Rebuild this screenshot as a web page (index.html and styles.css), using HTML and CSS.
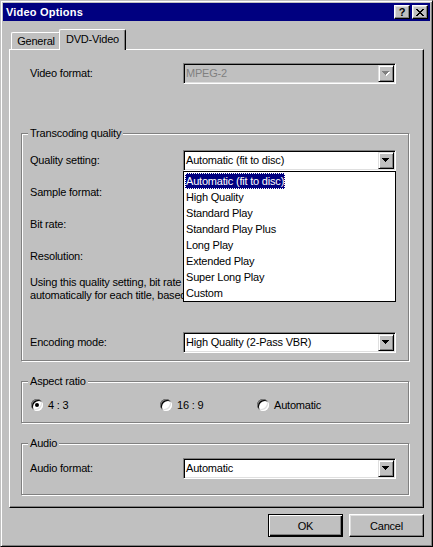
FILE: index.html
```html
<!DOCTYPE html>
<html>
<head>
<meta charset="utf-8">
<title>Video Options</title>
<link rel="stylesheet" href="styles.css">
</head>
<body>
<div class="window">
  <div class="titlebar">
    <span class="title">Video Options</span>
    <div class="title-btns">
      <span class="tbtn">?</span>
      <span class="tbtn"><svg width="8" height="7" viewBox="0 0 8 7" shape-rendering="crispEdges"><path fill="#000" d="M0 0h2v1H0z M6 0h2v1H6z M1 1h2v1H1z M5 1h2v1H5z M2 2h4v1H2z M3 3h2v1H3z M2 4h4v1H2z M1 5h2v1H1z M5 5h2v1H5z M0 6h2v1H0z M6 6h2v1H6z"/></svg></span>
    </div>
  </div>

  <div class="tabs">
    <div class="tab">General</div>
    <div class="tab active">DVD-Video</div>
  </div>

  <div class="panel">
    <div class="row video-row">
      <span class="label">Video format:</span>
      <div class="combo disabled">
        <span class="combo-value">MPEG-2</span>
        <span class="combo-btn"><svg width="8" height="5" viewBox="0 0 8 5" shape-rendering="crispEdges"><path fill="#fff" d="M1 1h7v1H1z M2 2h5v1H2z M3 3h3v1H3z M4 4h1v1H4z"/><path fill="#808080" d="M0 0h7v1H0z M1 1h5v1H1z M2 2h3v1H2z M3 3h1v1H3z"/></svg></span>
      </div>
    </div>

    <div class="group transcoding">
      <div class="group-title">Transcoding quality</div>
      <div class="row q-row">
        <span class="label">Quality setting:</span>
        <div class="combo open">
          <span class="combo-value">Automatic (fit to disc)</span>
          <span class="combo-btn"><svg width="7" height="4" viewBox="0 0 7 4" shape-rendering="crispEdges"><path fill="#000" d="M0 0h7v1H0z M1 1h5v1H1z M2 2h3v1H2z M3 3h1v1H3z"/></svg></span>
          <ul class="dropdown">
            <li><span class="selected">Automatic (fit to disc)</span></li>
            <li><span>High Quality</span></li>
            <li><span>Standard Play</span></li>
            <li><span>Standard Play Plus</span></li>
            <li><span>Long Play</span></li>
            <li><span>Extended Play</span></li>
            <li><span>Super Long Play</span></li>
            <li><span>Custom</span></li>
          </ul>
        </div>
      </div>
      <div class="row spaced"><span class="label">Sample format:</span></div>
      <div class="row spaced"><span class="label">Bit rate:</span></div>
      <div class="row spaced"><span class="label">Resolution:</span></div>
      <div class="hint">Using this quality setting, bit rate and resolution will be set<br>automatically for each title, based on its length.</div>
      <div class="row enc-row">
        <span class="label">Encoding mode:</span>
        <div class="combo">
          <span class="combo-value">High Quality (2-Pass VBR)</span>
          <span class="combo-btn"><svg width="7" height="4" viewBox="0 0 7 4" shape-rendering="crispEdges"><path fill="#000" d="M0 0h7v1H0z M1 1h5v1H1z M2 2h3v1H2z M3 3h1v1H3z"/></svg></span>
        </div>
      </div>
    </div>

    <div class="group aspect">
      <div class="group-title">Aspect ratio</div>
      <div class="radios">
        <div class="opt opt1"><span class="radio checked"></span><span>4 : 3</span></div>
        <div class="opt opt2"><span class="radio"></span><span>16 : 9</span></div>
        <div class="opt"><span class="radio"></span><span>Automatic</span></div>
      </div>
    </div>

    <div class="group audio">
      <div class="group-title">Audio</div>
      <div class="row audio-row">
        <span class="label">Audio format:</span>
        <div class="combo">
          <span class="combo-value">Automatic</span>
          <span class="combo-btn"><svg width="7" height="4" viewBox="0 0 7 4" shape-rendering="crispEdges"><path fill="#000" d="M0 0h7v1H0z M1 1h5v1H1z M2 2h3v1H2z M3 3h1v1H3z"/></svg></span>
        </div>
      </div>
    </div>
  </div>

  <div class="buttons">
    <button class="btn default">OK</button>
    <button class="btn">Cancel</button>
  </div>
</div>
</body>
</html>
```

FILE: styles.css
```css
* { box-sizing: border-box; }
html, body { margin: 0; padding: 0; }
body {
  width: 433px;
  height: 547px;
  overflow: hidden;
  background: #c0c0c0;
  font-family: "Liberation Sans", Arial, sans-serif;
  font-size: 11px;
  letter-spacing: -0.2px;
  color: #000;
}
.window {
  width: 433px;
  height: 547px;
  padding: 2px;
  background: #c0c0c0;
  border: 1px solid;
  border-color: #c0c0c0 #000 #000 #c0c0c0;
  box-shadow: inset 1px 1px 0 #fff, inset -1px -1px 0 #808080;
}
.titlebar {
  height: 18px;
  background: #000080;
  display: flex;
  align-items: center;
  padding: 0 2px 0 3px;
}
.title {
  color: #fff;
  font-weight: bold;
  letter-spacing: 0.2px;
  line-height: 13px;
  white-space: nowrap;
}
.title-btns {
  margin-left: auto;
  display: flex;
  gap: 2px;
}
.tbtn {
  width: 16px;
  height: 14px;
  flex: none;
  background: #c0c0c0;
  border: 1px solid;
  border-color: #fff #000 #000 #fff;
  box-shadow: inset -1px -1px 0 #808080, inset 1px 1px 0 #dfdfdf;
  display: flex;
  align-items: center;
  justify-content: center;
  font-weight: bold;
  line-height: 12px;
  letter-spacing: 0;
}
.tbtn svg { display: block; }
.tabs {
  margin-top: 8px;
  height: 20px;
  display: flex;
  align-items: flex-end;
  padding-left: 8px;
}
.tab {
  height: 17px;
  width: 50px;
  padding-top: 2px;
  line-height: 13px;
  text-align: center;
  background: #c0c0c0;
  border: 1px solid;
  border-bottom: none;
  border-color: #fff #000 #000 #fff;
  border-radius: 2px 2px 0 0;
  box-shadow: inset -1px 0 0 #808080;
}
.tab.active {
  height: 21px;
  width: 67px;
  padding-top: 3px;
  margin-left: -2px;
  margin-bottom: -1px;
  position: relative;
  z-index: 2;
}
.panel {
  margin: 0 6px;
  height: 459px;
  border: 1px solid;
  border-color: #fff #000 #000 #fff;
  box-shadow: inset -1px -1px 0 #808080;
  padding: 0 14px 0 11px;
}
.row {
  display: flex;
  align-items: center;
  height: 21px;
}
.label {
  width: 153px;
  flex: none;
  line-height: 13px;
  white-space: nowrap;
}
.video-row {
  margin-top: 13px;
  padding-left: 9px;
}
.combo {
  width: 213px;
  height: 21px;
  flex: none;
  display: flex;
  padding: 1px;
  background: #fff;
  border: 1px solid;
  border-color: #808080 #fff #fff #808080;
  box-shadow: inset 1px 1px 0 #000, inset -1px -1px 0 #dfdfdf;
}
.combo.open { position: relative; }
.combo.disabled { background: #c0c0c0; }
.combo-value {
  flex: 1;
  padding-left: 1px;
  line-height: 17px;
  white-space: nowrap;
  overflow: hidden;
}
.combo.disabled .combo-value { color: #808080; }
.combo-btn {
  width: 16px;
  height: 17px;
  flex: none;
  background: #c0c0c0;
  border: 1px solid;
  border-color: #dfdfdf #000 #000 #dfdfdf;
  box-shadow: inset 1px 1px 0 #fff, inset -1px -1px 0 #808080;
}
.combo-btn svg {
  display: block;
  margin: 5px 0 0 3px;
}
.dropdown {
  position: absolute;
  left: -1px;
  top: 20px;
  width: 213px;
  margin: 0;
  padding: 1px 0 0 1px;
  list-style: none;
  background: #fff;
  border: 1px solid #000;
  z-index: 5;
}
.dropdown li {
  height: 16px;
  line-height: 16px;
  white-space: nowrap;
}
.dropdown li span {
  display: inline-block;
  height: 16px;
  padding: 0 1px;
}
.dropdown li span.selected {
  background: #000080;
  color: #fff;
  outline: 1px dotted #fff;
  outline-offset: -1px;
}
.group {
  border: 1px solid #808080;
  box-shadow: inset 1px 1px 0 #fff, 1px 1px 0 #fff;
  padding-left: 8px;
}
.group-title {
  width: fit-content;
  margin: -7px 0 0 -2px;
  padding: 0 2px;
  line-height: 13px;
  background: #c0c0c0;
  white-space: nowrap;
}
.transcoding {
  margin-top: 49px;
  padding-bottom: 7px;
}
.q-row { margin-top: 10px; }
.spaced { margin-top: 11px; }
.hint {
  margin-top: 9px;
  width: 360px;
  line-height: 13px;
  white-space: nowrap;
  overflow: hidden;
}
.enc-row { margin-top: 30px; }
.aspect {
  margin-top: 20px;
  padding-bottom: 10px;
}
.radios {
  margin-top: 10px;
  height: 14px;
  display: flex;
  align-items: center;
  padding-left: 1px;
}
.opt {
  display: flex;
  align-items: center;
  gap: 5px;
  line-height: 13px;
}
.opt1 { width: 129px; }
.opt2 { width: 97px; }
.radio {
  width: 12px;
  height: 12px;
  flex: none;
  border-radius: 50%;
  background: #fff;
  position: relative;
  box-shadow: inset 1px 1px 0 #808080, inset -1px -1px 0 #fff, inset 2px 2px 0 #000, inset -2px -2px 0 #dfdfdf;
}
.radio.checked::after {
  content: "";
  position: absolute;
  left: 4px;
  top: 4px;
  width: 4px;
  height: 4px;
  border-radius: 50%;
  background: #000;
}
.audio {
  margin-top: 20px;
  padding-bottom: 15px;
}
.audio-row { margin-top: 8px; }
.buttons {
  margin-top: 6px;
  display: flex;
  justify-content: flex-end;
  gap: 6px;
  padding-right: 6px;
}
.btn {
  appearance: none;
  width: 75px;
  height: 23px;
  margin: 0;
  padding: 0;
  font: inherit;
  letter-spacing: inherit;
  color: #000;
  background: #c0c0c0;
  border: 1px solid;
  border-color: #fff #000 #000 #fff;
  box-shadow: inset -1px -1px 0 #808080, inset 1px 1px 0 #dfdfdf;
  display: flex;
  align-items: center;
  justify-content: center;
}
.btn.default {
  border: 1px solid #000;
  box-shadow: inset 1px 1px 0 #fff, inset -1px -1px 0 #000, inset -2px -2px 0 #808080;
}
```
